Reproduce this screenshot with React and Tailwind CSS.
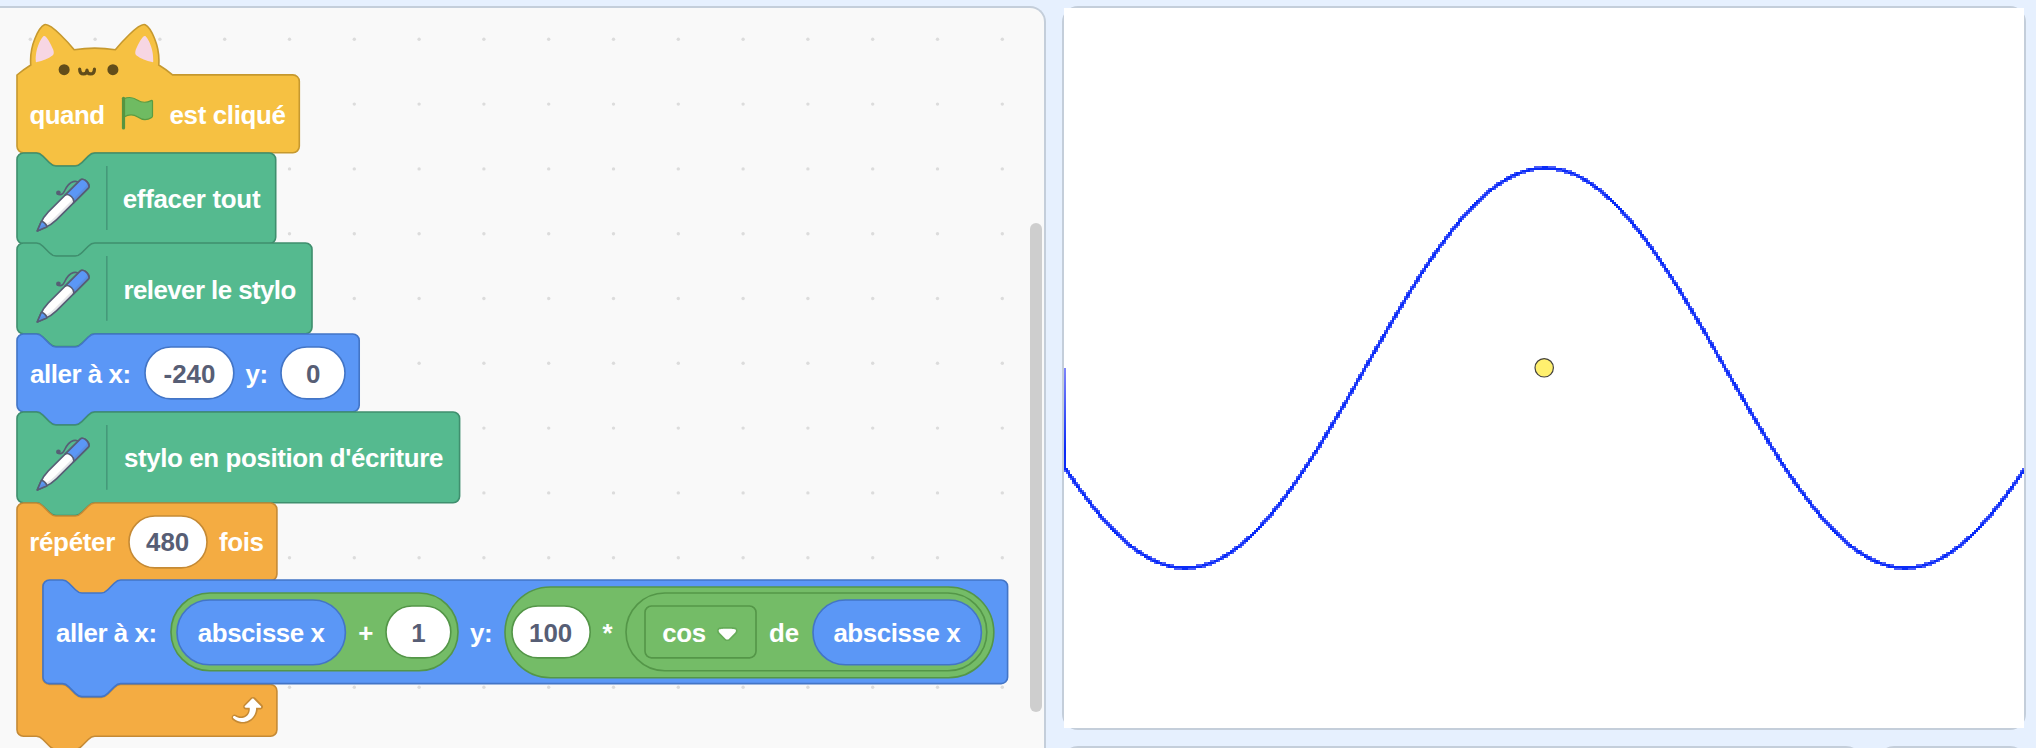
import React from "react";

const U = 1.62; // pixels per block unit

const NOTCH_TOP = "H 12 c 2,0 3,1 4,2 l 4,4 c 1,1 2,2 4,2 h 12 c 2,0 3,-1 4,-2 l 4,-4 c 1,-1 2,-2 4,-2";
const notchBottom = (x) =>
  `H ${48 + x} c -2,0 -3,1 -4,2 l -4,4 c -1,1 -2,2 -4,2 h -12 c -2,0 -3,-1 -4,-2 l -4,-4 c -1,-1 -2,-2 -4,-2`;

const stackPath = (w, h) =>
  `M 0,4 A 4,4 0 0,1 4,0 ${NOTCH_TOP} H ${w - 4} a 4,4 0 0,1 4,4 V ${h - 4} a 4,4 0 0,1 -4,4 ${notchBottom(0)} H 4 a 4,4 0 0,1 -4,-4 z`;

const hatPath = (w, h) =>
  `M 0,0 c 2.6,-2.3 5.5,-4.3 8.5,-6.2 c -1,-12.5 5.3,-23.3 8.4,-24.8 c 3.7,-1.8 16.5,13.1 18.4,15.4 c 8.4,-1.3 17,-1.3 25.4,0 c 1.9,-2.3 14.7,-17.2 18.4,-15.4 c 3.1,1.5 9.4,12.3 8.4,24.8 c 3,1.8 5.9,3.9 8.5,6.1 H ${w - 4} a 4,4 0 0,1 4,4 V ${h - 4} a 4,4 0 0,1 -4,4 ${notchBottom(0)} H 4 a 4,4 0 0,1 -4,-4 z`;

const loopPath = (w) =>
  `M 0,4 A 4,4 0 0,1 4,0 ${NOTCH_TOP} H ${w - 4} a 4,4 0 0,1 4,4 V 44 a 4,4 0 0,1 -4,4 ${notchBottom(16)} h -8 a 4,4 0 0,0 -4,4 V 108 a 4,4 0 0,0 4,4 h 8 c 2,0 3,1 4,2 l 4,4 c 1,1 2,2 4,2 h 12 c 2,0 3,-1 4,-2 l 4,-4 c 1,-1 2,-2 4,-2 H ${w - 4} a 4,4 0 0,1 4,4 V 140 a 4,4 0 0,1 -4,4 ${notchBottom(0)} H 4 a 4,4 0 0,1 -4,-4 z`;

function Outline({ d, className, children }) {
  return (
    <svg className="absolute top-0 left-0 h-px w-px overflow-visible" aria-hidden="true">
      <g transform={`scale(${U})`}>
        <path d={d} className={className} />
        {children}
      </g>
    </svg>
  );
}

const MOTION = "fill-[#5b97f6] stroke-[#4375c6] stroke-1";
const PEN = "fill-[#55ba8f] stroke-[#3f8f6e] stroke-1";
const EVENT = "fill-[#f6c142] stroke-[#c6992f] stroke-1";
const CONTROL = "fill-[#f4ac42] stroke-[#c58a35] stroke-1";
const OPERATOR = "fill-[#74bc67] stroke-[#549648] stroke-1";

function Pill({ w, h, r, tone, className = "", children }) {
  return (
    <div className={`relative flex shrink-0 items-center ${className}`} style={{ width: w, height: h * U }}>
      <svg className="absolute top-0 left-0 h-px w-px overflow-visible" aria-hidden="true">
        <g transform={`scale(${U})`}>
          <rect width={w / U} height={h} rx={r ?? h / 2} className={tone} />
        </g>
      </svg>
      {children}
    </div>
  );
}

function Field({ w, stroke, className = "", children }) {
  return (
    <Pill w={w} h={32} tone={`fill-white stroke-1 ${stroke}`} className={`justify-center ${className}`}>
      <span className="relative top-px text-[#575e75]">{children}</span>
    </Pill>
  );
}

function Label({ className = "", children }) {
  return (
    <span className={`relative top-px flex shrink-0 justify-center whitespace-nowrap text-white ${className}`}>
      {children}
    </span>
  );
}

function PenIcon() {
  return (
    <svg viewBox="0 0 40 40" className="relative top-[6.5px] ml-[13px] h-[64.8px] w-[64.8px] shrink-0" fill="none">
      <g stroke="#575e75" strokeLinejoin="round" strokeLinecap="round">
        <path
          fill="#fff"
          d="M8.753 34.602l-4.25 1.779 1.784-4.236c1.218-2.892 2.907-5.423 5.03-7.538L31.066 4.93c.846-.842 2.65-.41 4.032.967 1.38 1.375 1.816 3.173.97 4.015L16.318 29.59c-2.123 2.116-4.664 3.799-7.565 5.012"
        />
        <path d="M29.41 6.111s-4.45-2.379-8.202 5.771c-1.734 3.766-4.35 1.546-4.35 1.546" />
        <path
          fill="#5b97f6"
          d="M36.42 8.825c0 .463-.14.873-.432 1.164l-9.335 9.301c.282-.29.41-.668.41-1.12 0-.874-.507-1.963-1.406-2.868-1.362-1.358-3.147-1.8-4.002-.99L30.99 5.01c.844-.84 2.65-.41 4.035.96.898.904 1.396 1.982 1.396 2.855M10.515 33.774c-.573.302-1.157.57-1.764.83L4.5 36.382l1.786-4.235c.258-.604.529-1.186.833-1.757.69.183 1.449.625 2.109 1.282.659.658 1.102 1.412 1.287 2.102"
        />
      </g>
      <path
        fill="#575e75"
        opacity=".15"
        d="M36.498 8.748c0 .464-.14.874-.433 1.165l-19.742 19.68c-2.131 2.111-4.673 3.793-7.572 5.01L4.5 36.381l.974-2.317 1.925-.808c2.898-1.218 5.44-2.9 7.57-5.01l19.743-19.68c.292-.292.432-.702.432-1.165 0-.646-.27-1.4-.78-2.122.25.172.5.377.737.614.898.905 1.396 1.983 1.396 2.856"
      />
      <circle cx="17.55" cy="12.83" r=".95" fill="#575e75" stroke="#575e75" />
    </svg>
  );
}

function PenBlock({ w, children }) {
  return (
    <div className="relative flex h-[90.72px] items-center" style={{ width: w }}>
      <Outline d={stackPath(w / U, 56)} className={PEN} />
      <PenIcon />
      <div className="relative ml-[12.1px] h-[64.8px] w-[1.6px] shrink-0">
        <svg className="h-full w-full">
          <rect width="1.6" height="64.8" fill="#45997a" />
        </svg>
      </div>
      {children}
    </div>
  );
}

function CatFace() {
  const ear = "M22.4,-15.6 c-1.7,-4.2 -4.5,-9.1 -5.8,-8.5 c-1.6,.8 -5.4,7.9 -5,15.4 c0,.6 .1,.9 .7,.7 c3.6,-.6 6.9,-2 9.8,-4.2 c.8,-.6 .7,-2 .3,-3.4 z";
  return (
    <>
      <path d={ear} fill="#f7d6e3" />
      <path d={ear} fill="#f7d6e3" transform="translate(95.7,0) scale(-1,1)" />
      <circle cx="29.1" cy="-3.3" r="3.4" fill="#624d1a" />
      <circle cx="59.2" cy="-3.3" r="3.4" fill="#624d1a" />
      <path
        d="M38.7,-3.6 c0,1.8 .8,2.9 2.4,2.9 c1.3,0 2.1,-.9 2.1,-2.3 c0,1.4 .9,2.3 2.2,2.3 c1.6,0 2.4,-1.1 2.4,-2.9"
        fill="none"
        stroke="#624d1a"
        strokeWidth="2"
        strokeLinecap="round"
        strokeLinejoin="round"
      />
    </>
  );
}

function FlagIcon() {
  return (
    <svg viewBox="0 0 39 39" className="relative ml-[12.7px] h-[39px] w-[39px] shrink-0">
      <path
        d="M6 4.6 C10.5 2.8 15 3.2 19.2 5.9 C23.6 8.8 28.5 8.9 33.2 6.6 C34 6.2 34.5 6.4 34.5 7.2 V22 C34.5 22.7 34.3 23 33.7 23.4 C29 26.4 24 26 19.8 23 C15.5 20.1 10.5 20.2 6 23 Z"
        fill="#6fbb62"
        stroke="#5a9b42"
        strokeWidth="1.2"
        strokeLinejoin="round"
      />
      <path d="M5.5 4.3 V34" stroke="#579440" strokeWidth="3.2" strokeLinecap="round" />
    </svg>
  );
}

function RepeatIcon() {
  return (
    <svg viewBox="0 0 24 24" className="mr-[12.8px] h-[38.9px] w-[38.9px] shrink-0">
      <path
        fill="#c58a35"
        d="M23.3,11c-0.3,0.6-0.9,1-1.5,1h-1.6c-0.1,1.3-0.5,2.5-1.1,3.6c-0.9,1.7-2.3,3.2-4.1,4.1c-1.7,0.9-3.6,1.2-5.5,0.9c-1.8-0.3-3.5-1.1-4.9-2.3c-0.7-0.7-0.7-1.9,0-2.6c0.6-0.6,1.6-0.7,2.3-0.2H7c0.9,0.6,1.9,0.9,2.9,0.9s1.9-0.3,2.7-0.9c1.1-0.8,1.8-2.1,1.8-3.5h-1.5c-0.9,0-1.7-0.7-1.7-1.7c0-0.4,0.2-0.9,0.5-1.2l4.4-4.4c0.7-0.6,1.7-0.6,2.4,0L23,9.2C23.5,9.7,23.6,10.4,23.3,11z"
      />
      <path
        fill="#fff"
        d="M21.8,11h-2.6c0,1.5-0.3,2.9-1,4.2c-0.8,1.6-2.1,2.8-3.7,3.6c-1.5,0.8-3.3,1.1-4.9,0.8c-1.6-0.2-3.2-1-4.4-2.1c-0.4-0.3-0.4-0.9-0.1-1.2c0.3-0.4,0.9-0.4,1.2-0.1l0,0c1,0.7,2.2,1.1,3.4,1.1s2.3-0.3,3.3-1c0.9-0.6,1.6-1.5,2-2.6c0.3-0.9,0.4-1.8,0.2-2.8h-2.4c-0.4,0-0.7-0.3-0.7-0.7c0-0.2,0.1-0.3,0.2-0.4l4.4-4.4c0.3-0.3,0.7-0.3,0.9,0L22,9.8c0.3,0.3,0.4,0.6,0.3,0.9S22,11,21.8,11z"
      />
    </svg>
  );
}

function Caret() {
  return (
    <svg viewBox="0 0 12.71 8.79" className="relative top-[1.5px] ml-[10.6px] h-[14.24px] w-[20.6px] shrink-0">
      <path
        fill="#549648"
        opacity=".45"
        d="M12.71,2.44A2.41,2.41,0,0,1,12,4.16L8.08,8.08a2.45,2.45,0,0,1-3.45,0L0.72,4.16A2.42,2.42,0,0,1,0,2.44,2.48,2.48,0,0,1,.71.71C1,0.47,1.43,0,6.36,0S11.75,0.46,12,.71A2.44,2.44,0,0,1,12.71,2.44Z"
      />
      <path
        fill="#fff"
        d="M6.36,7.79a1.43,1.43,0,0,1-1-.42L1.42,3.45a1.44,1.44,0,0,1,0-2c0.56-.56,9.31-0.56,9.87,0a1.44,1.44,0,0,1,0,2L7.37,7.37A1.43,1.43,0,0,1,6.36,7.79Z"
      />
    </svg>
  );
}

function Abscisse({ className = "" }) {
  return (
    <Pill w={168.4} h={40} tone={MOTION} className={`justify-center ${className}`}>
      <Label className="tracking-[-0.42px]">abscisse x</Label>
    </Pill>
  );
}

const MOTION_EDGE = "stroke-[#4375c6]";
const OPERATOR_EDGE = "stroke-[#549648]";

function InnerGoTo() {
  return (
    <div className="relative ml-[25.92px] flex h-[103.68px] w-[964.6px] items-center">
      <Outline d={stackPath(964.6 / U, 64)} className={MOTION} />
      <Label className="ml-[12.8px] w-[102px] tracking-[-0.45px]">aller à x:</Label>
      <Pill w={287} h={48} tone={OPERATOR} className="ml-[13.8px]">
        <Abscisse className="ml-[5.9px]" />
        <Label className="ml-[12.4px] w-[16px]">+</Label>
        <Field w={64.8} stroke={OPERATOR_EDGE} className="ml-[12.4px]">1</Field>
      </Pill>
      <Label className="ml-[11px] w-[24px] tracking-[-0.4px]">y:</Label>
      <Pill w={488.8} h={56} tone={OPERATOR} className="ml-[11.6px]">
        <Field w={78.2} stroke={OPERATOR_EDGE} className="ml-[6.9px]">100</Field>
        <Label className="ml-[11.8px] w-[12px]">*</Label>
        <Pill w={360.8} h={48} tone={OPERATOR} className="ml-[12.4px]">
          <Pill w={111} h={32} r={4} tone={OPERATOR} className="ml-[19.3px]">
            <Label className="ml-[16.5px] w-[44.6px] tracking-[-0.3px]">cos</Label>
            <Caret />
          </Pill>
          <Label className="ml-[12.2px] w-[31px] tracking-[-0.3px]">de</Label>
          <Abscisse className="ml-[13.2px]" />
        </Pill>
      </Pill>
    </div>
  );
}

function Script() {
  return (
    <div className="flex flex-col items-start pt-[66.9px] pl-[16.6px] font-['Liberation_Sans',sans-serif] text-[25.92px] leading-[30px] font-bold">
      <div className="relative flex h-[77.76px] w-[282.3px] items-center">
        <Outline d={hatPath(282.3 / U, 48)} className={EVENT}>
          <CatFace />
        </Outline>
        <Label className="ml-[11.9px] w-[77px] tracking-[-0.5px]">quand</Label>
        <FlagIcon />
        <Label className="ml-[11.4px] w-[118px] tracking-[-0.35px]">est cliqué</Label>
      </div>
      <PenBlock w={258.7}>
        <Label className="ml-[13.9px] w-[139px] tracking-[-0.3px]">effacer tout</Label>
      </PenBlock>
      <PenBlock w={295}>
        <Label className="ml-[14.5px] w-[174px] tracking-[-0.57px]">relever le stylo</Label>
      </PenBlock>
      <div className="relative flex h-[77.76px] w-[342.2px] items-center">
        <Outline d={stackPath(342.2 / U, 48)} className={MOTION} />
        <Label className="ml-[12.8px] w-[102px] tracking-[-0.45px]">aller à x:</Label>
        <Field w={88.8} stroke={MOTION_EDGE} className="ml-[13.7px]">-240</Field>
        <Label className="ml-[10.8px] w-[24px] tracking-[-0.4px]">y:</Label>
        <Field w={64} stroke={MOTION_EDGE} className="ml-[12.6px]">0</Field>
      </div>
      <PenBlock w={442.6}>
        <Label className="ml-[14.9px] w-[321px] tracking-[-0.4px]">stylo en position d'écriture</Label>
      </PenBlock>
      <div className="relative h-[233.28px] w-[259.9px]">
        <Outline d={loopPath(259.9 / U)} className={CONTROL} />
        <div className="relative flex h-[77.76px] items-center">
          <Label className="ml-[12px] w-[87px] tracking-[-0.3px]">répéter</Label>
          <Field w={78} stroke="stroke-[#c58a35]" className="ml-[13px]">480</Field>
          <Label className="ml-[12.2px] w-[45px] tracking-[-0.4px]">fois</Label>
        </div>
        <InnerGoTo />
        <div className="relative flex h-[51.84px] items-center justify-end">
          <RepeatIcon />
        </div>
      </div>
    </div>
  );
}

function GridDots() {
  const dots = [];
  for (let r = 0; r < 12; r++) for (let c = 0; c < 16; c++) dots.push([30.3 + c * 64.8, 31.3 + r * 64.8]);
  return (
    <svg className="absolute inset-0 h-full w-full">
      {dots.map(([x, y]) => (
        <circle key={`${x}-${y}`} cx={x} cy={y} r="1.7" fill="#dcdcdc" />
      ))}
    </svg>
  );
}

// Pen trail of the cosine, on the stage's own 480x360 pixel grid.
function trailPixels() {
  const full = [];
  const soft = [];
  const f = (x) => 180 - 100 * Math.cos(((x - 240) * Math.PI) / 180);
  for (let i = 0; i < 480; i++) {
    const x = i - 0.1;
    const slope = f(x + 0.5) - f(x - 0.5);
    const k = Math.sqrt(1 + slope * slope);
    const y = f(x);
    for (let j = Math.floor(y) - 5; j < y + 5; j++) {
      const d = Math.abs(j + 0.5 - y) / k;
      if (d <= 0.52) full.push(`M${i} ${j}h1v1h-1z`);
      else if (d < 1) soft.push(`M${i} ${j}h1v1h-1z`);
    }
  }
  return [full.join(""), soft.join("")];
}

function StageCanvas() {
  const [full, soft] = trailPixels();
  return (
    <svg viewBox="0 0 480 360" className="relative h-[720px] w-[960px] shrink-0 bg-white" shapeRendering="crispEdges">
      <defs>
        <linearGradient id="fade" x1="0" y1="0" x2="0" y2="1">
          <stop offset="0" stopColor="#7f86fb" />
          <stop offset=".8" stopColor="#0a2af6" />
        </linearGradient>
      </defs>
      <path d={soft} fill="#4a5cfa" />
      <path d={full} fill="#0a2cf8" />
      <rect x="0" y="180" width="1" height="51" fill="url(#fade)" />
      <circle cx="240.1" cy="179.9" r="4.6" fill="#fff06e" stroke="#45423c" strokeWidth=".6" shapeRendering="auto" />
    </svg>
  );
}

export default function App() {
  return (
    <div className="flex h-[748px] w-[2036px] gap-4 overflow-hidden bg-[#e6f0fe] pt-1.5">
      <main className="relative h-[800px] w-[1046px] shrink-0 overflow-hidden rounded-tr-2xl border-t-2 border-r-2 border-[#c4ceda] bg-[#f9f9f9]">
        <GridDots />
        <Script />
        <div className="absolute top-[215px] right-[2px] h-[489px] w-3 rounded-full bg-[#cecece]" />
      </main>
      <aside className="flex w-[964px] shrink-0 flex-col gap-4">
        <section className="flex h-[724px] shrink-0 rounded-2xl border-2 border-[#c4ceda]">
          <StageCanvas />
        </section>
        <div className="flex shrink-0 gap-4">
          <div className="h-20 w-[800px] rounded-2xl border-2 border-[#c4ceda] bg-white" />
          <div className="h-20 flex-1 rounded-2xl border-2 border-[#c4ceda] bg-white" />
        </div>
      </aside>
    </div>
  );
}
